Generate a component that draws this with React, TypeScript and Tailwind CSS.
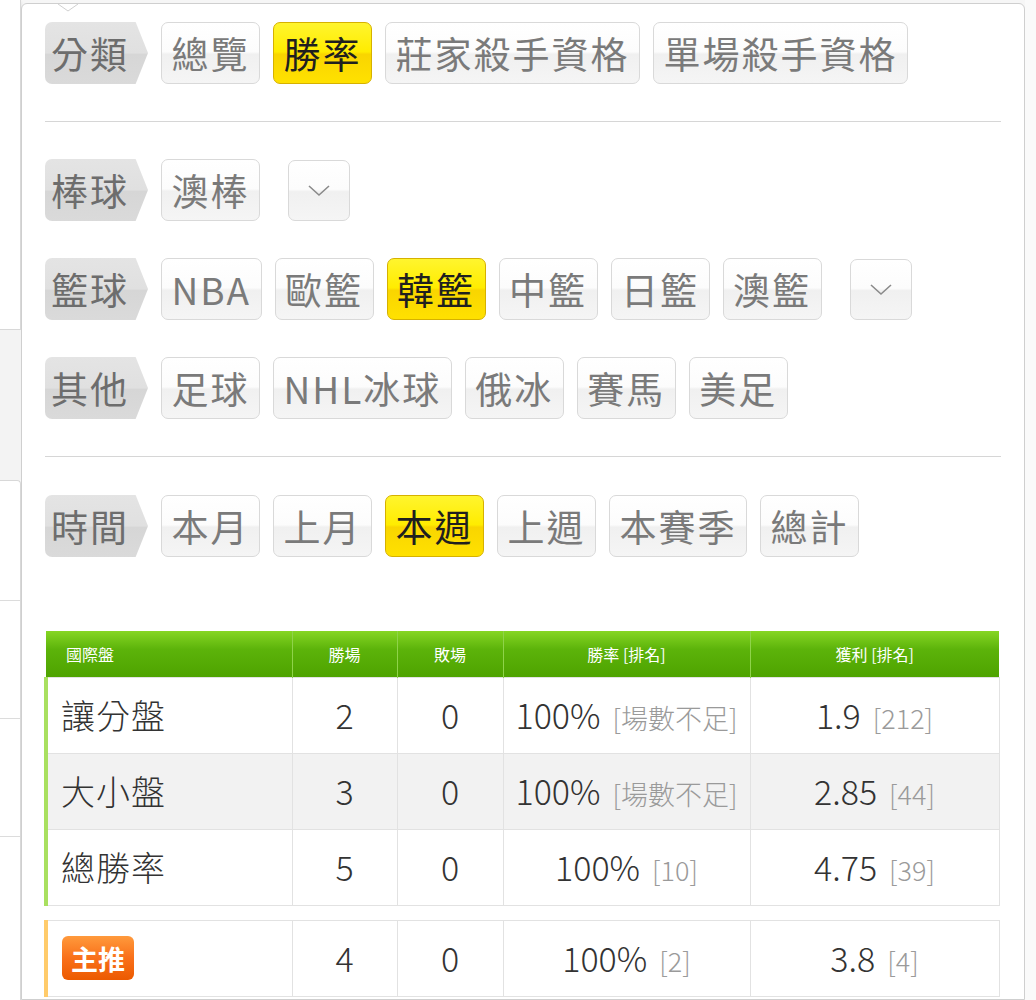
import React from "react";

const FONT = "font-['Noto_Sans_CJK_TC','Noto_Sans',sans-serif]";

const btnBase =
  "h-[62px] flex items-center justify-center rounded-[7px] border px-[9.5px] text-[37px] tracking-[2px] leading-none whitespace-nowrap";
const btnNormal =
  "border-[#d9d9d9] text-[#7a7a7a] bg-[linear-gradient(180deg,#ffffff_0%,#fcfcfc_48%,#f0f0f0_52%,#f5f5f5_100%)]";
const btnActive =
  "border-[#d6b100] text-[#1f1f1f] bg-[linear-gradient(180deg,#fff52e_0%,#ffec00_48%,#f9d500_52%,#ffe100_100%)]";

function Label({ text }: { text: string }) {
  return (
    <div className="h-[62px] w-[103px] shrink-0 flex items-center pl-[6px] text-[37px] tracking-[2px] leading-none text-[#6d6d6d] rounded-l-[7px] bg-[linear-gradient(180deg,#e4e4e4_0%,#e0e0e0_50%,#d6d6d6_52%,#dadada_100%)] [clip-path:polygon(0_0,88%_0,100%_50%,88%_100%,0_100%)]">
      {text}
    </div>
  );
}

function Btn({ text, active }: { text: string; active?: boolean }) {
  return <div className={`${btnBase} ${active ? btnActive : btnNormal}`}>{text}</div>;
}

function DropBtn() {
  return (
    <div className={`h-[61px] w-[62px] ml-[15px] flex items-center justify-center rounded-[7px] border ${btnNormal}`}>
      <svg width="24" height="13" viewBox="0 0 24 13">
        <polyline points="2,2 12,11 22,2" fill="none" stroke="#8a8a8a" strokeWidth="1.6" />
      </svg>
    </div>
  );
}

function Row({ label, items, active, drop }: { label: string; items: string[]; active?: string; drop?: boolean }) {
  return (
    <div className="flex items-center gap-[13px]">
      <Label text={label} />
      {items.map((t) => (
        <Btn key={t} text={t} active={t === active} />
      ))}
      {drop && <DropBtn />}
    </div>
  );
}

const rows = [
  { name: "讓分盤", win: 2, lose: 0, rate: "100%", rateRank: "[場數不足]", profit: "1.9", profitRank: "[212]", gray: false },
  { name: "大小盤", win: 3, lose: 0, rate: "100%", rateRank: "[場數不足]", profit: "2.85", profitRank: "[44]", gray: true },
  { name: "總勝率", win: 5, lose: 0, rate: "100%", rateRank: "[10]", profit: "4.75", profitRank: "[39]", gray: false },
];

const td = "border border-[#e2e2e2] text-center text-[34px] font-light text-[#333] leading-none whitespace-nowrap";

function Cells({ r }: { r: (typeof rows)[number] }) {
  return (
    <>
      <td className={td}>{r.win}</td>
      <td className={td}>{r.lose}</td>
      <td className={td}>
        {r.rate}
        <span className="ml-[12px] text-[27px] text-[#9a9a9a]">{r.rateRank}</span>
      </td>
      <td className={td}>
        {r.profit}
        <span className="ml-[12px] text-[27px] text-[#9a9a9a]">{r.profitRank}</span>
      </td>
    </>
  );
}

function Cols() {
  return (
    <colgroup>
      <col className="w-[246px]" />
      <col className="w-[105px]" />
      <col className="w-[106px]" />
      <col className="w-[247px]" />
      <col className="w-[249px]" />
    </colgroup>
  );
}

export default function App() {
  return (
    <div className={`w-[1036px] h-[1000px] overflow-hidden flex bg-[#f6f6f6] ${FONT}`}>
      {/* page behind the popup */}
      <div className="w-[21px] shrink-0 flex flex-col">
        <div className="h-[330px] bg-white border-r border-b border-[#d8d8d8] shadow-[0_2px_3px_rgba(0,0,0,0.12)]" />
        <div className="h-[150px] bg-[#f3f3f3]" />
        <div className="flex-1 bg-white border-r border-t border-[#d8d8d8] rounded-tr-[4px] flex flex-col">
          <div className="h-[120px] border-b border-[#dcdcdc]" />
          <div className="h-[118px] border-b border-[#dcdcdc]" />
          <div className="h-[118px] border-b border-[#dcdcdc]" />
        </div>
      </div>

      {/* popup */}
      <div className="relative mt-[3px] w-[1004px] shrink-0 bg-white border border-[#cfcfcf] rounded-t-[6px] px-[23px] pt-[18px]">
        <svg className="absolute left-[36px] -top-[1px]" width="20" height="9" viewBox="0 0 20 9">
          <polyline points="0,1 10,8 20,1" fill="#ffffff" stroke="#cfcfcf" strokeWidth="1" />
        </svg>

        <Row label="分類" items={["總覽", "勝率", "莊家殺手資格", "單場殺手資格"]} active="勝率" />
        <div className="h-px bg-[#d6d6d6] my-[37px]" />
        <div className="flex flex-col gap-[37px]">
          <Row label="棒球" items={["澳棒"]} drop />
          <Row label="籃球" items={["NBA", "歐籃", "韓籃", "中籃", "日籃", "澳籃"]} active="韓籃" drop />
          <Row label="其他" items={["足球", "NHL冰球", "俄冰", "賽馬", "美足"]} />
        </div>
        <div className="h-px bg-[#d6d6d6] mt-[37px] mb-[38px]" />
        <Row label="時間" items={["本月", "上月", "本週", "上週", "本賽季", "總計"]} active="本週" />

        <table className="mt-[74px] -ml-[1px] w-[953px] border-collapse table-fixed">
          <Cols />
          <thead>
            <tr className="h-[46px] bg-[linear-gradient(180deg,#86d624_0%,#5cb30a_40%,#4ea300_100%)] text-white text-[16px]">
              <th className="text-left font-normal pl-[20px] border-r border-[#8fd34a]">國際盤</th>
              <th className="font-normal border-r border-[#8fd34a]">勝場</th>
              <th className="font-normal border-r border-[#8fd34a]">敗場</th>
              <th className="font-normal border-r border-[#8fd34a]">勝率 [排名]</th>
              <th className="font-normal">獲利 [排名]</th>
            </tr>
          </thead>
          <tbody>
            {rows.map((r) => (
              <tr key={r.name} className={`h-[76px] ${r.gray ? "bg-[#f2f2f2]" : "bg-white"}`}>
                <td className="border border-[#e2e2e2] border-l-4 border-l-[#a9e060] pl-[13px] text-[34px] font-light text-[#333] leading-none tracking-[1px]">
                  {r.name}
                </td>
                <Cells r={r} />
              </tr>
            ))}
          </tbody>
        </table>

        <table className="mt-[14px] -ml-[1px] w-[953px] border-collapse table-fixed">
          <Cols />
          <tbody>
            <tr className="h-[76px] bg-white">
              <td className="border border-[#e2e2e2] border-l-4 border-l-[#ffcb6b] pl-[14px]">
                <span className="inline-flex items-center justify-center h-[44px] w-[72px] rounded-[6px] bg-[linear-gradient(180deg,#ff9a3c_0%,#f9701a_50%,#ec5a00_100%)] text-white text-[27px] font-bold leading-none">
                  主推
                </span>
              </td>
              <Cells
                r={{ name: "主推", win: 4, lose: 0, rate: "100%", rateRank: "[2]", profit: "3.8", profitRank: "[4]", gray: false }}
              />
            </tr>
          </tbody>
        </table>
      </div>
      <div className="flex-1 bg-[#fafafa]" />
    </div>
  );
}
